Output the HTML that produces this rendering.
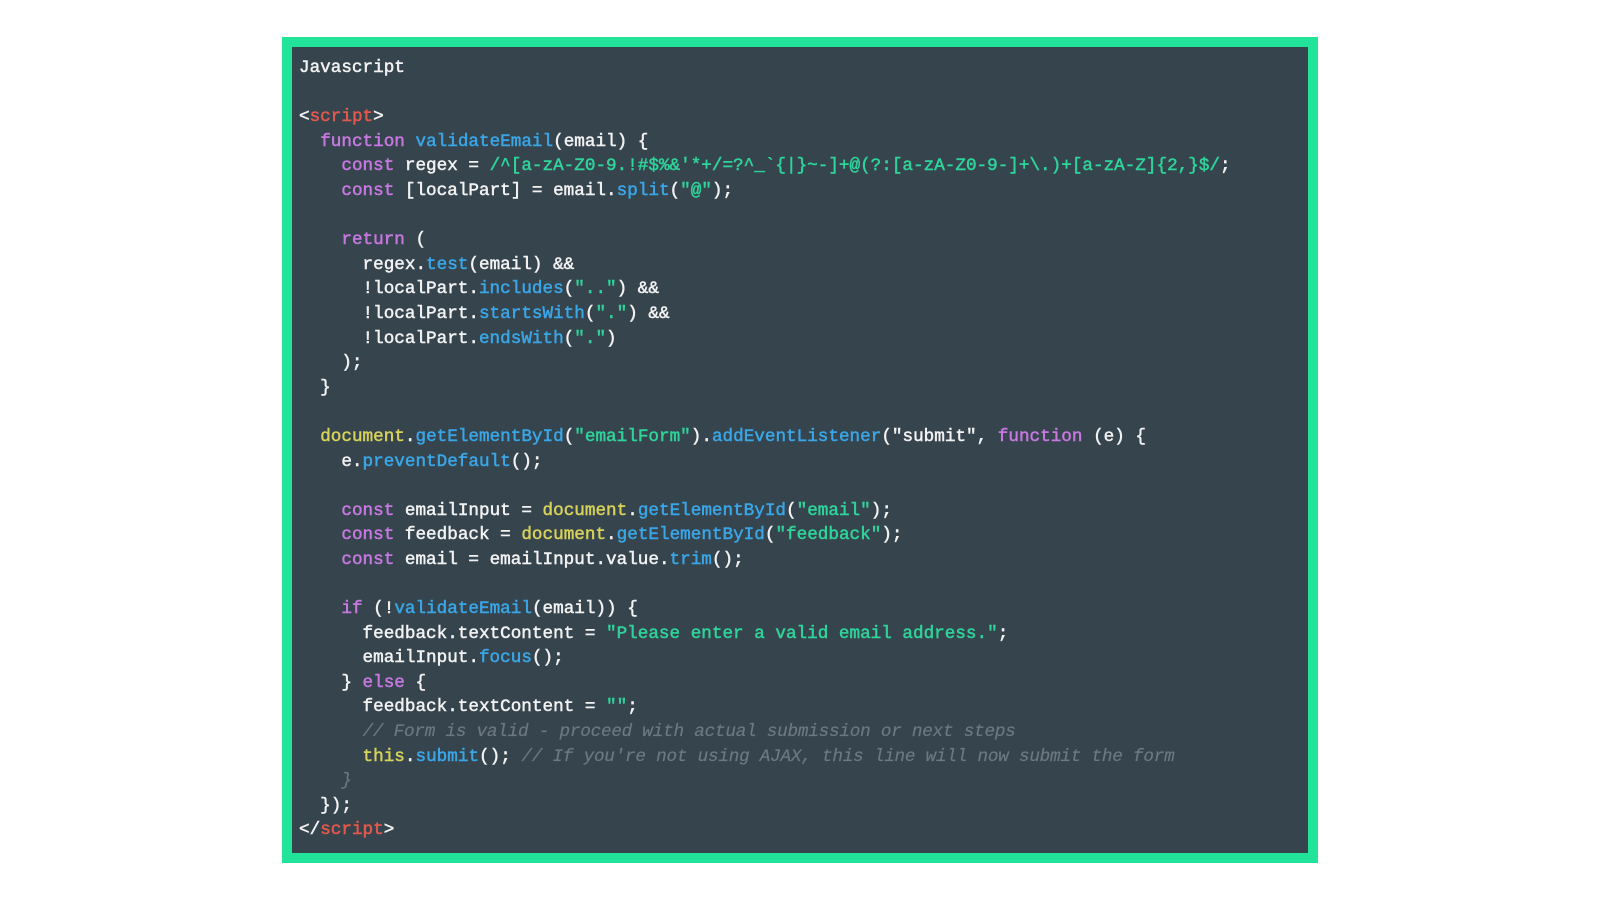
<!DOCTYPE html>
<html><head><meta charset="utf-8"><style>
html,body{margin:0;padding:0;background:#fff;width:1600px;height:900px;overflow:hidden}
.box{position:absolute;left:282px;top:37px;width:1016px;height:806px;border:10px solid #22e39a;background:#36444e}
pre{margin:0;position:absolute;left:7px;top:9px;font-family:"Liberation Mono",monospace;font-size:17.65px;line-height:24.6px;color:#f2f2f2;-webkit-text-stroke:0.5px currentColor}
.k{color:#c778e0}.f{color:#3aa6e6}.s{color:#2fd49a}.r{color:#e4584c}.y{color:#d6d25a}.c{color:#6c7882;font-style:italic;-webkit-text-stroke:0.2px currentColor;letter-spacing:-0.22px}
</style></head><body>
<div class="box"><pre>Javascript

&lt;<span class="r">script</span>&gt;
  <span class="k">function</span> <span class="f">validateEmail</span>(email) {
    <span class="k">const</span> regex = <span class="s">/^[a-zA-Z0-9.!#$%&amp;'*+/=?^_`{|}~-]+@(?:[a-zA-Z0-9-]+\.)+[a-zA-Z]{2,}$/</span>;
    <span class="k">const</span> [localPart] = email.<span class="f">split</span>(<span class="s">"@"</span>);

    <span class="k">return</span> (
      regex.<span class="f">test</span>(email) &amp;&amp;
      !localPart.<span class="f">includes</span>(<span class="s">".."</span>) &amp;&amp;
      !localPart.<span class="f">startsWith</span>(<span class="s">"."</span>) &amp;&amp;
      !localPart.<span class="f">endsWith</span>(<span class="s">"."</span>)
    );
  }

  <span class="y">document</span>.<span class="f">getElementById</span>(<span class="s">"emailForm"</span>).<span class="f">addEventListener</span>("submit", <span class="k">function</span> (e) {
    e.<span class="f">preventDefault</span>();

    <span class="k">const</span> emailInput = <span class="y">document</span>.<span class="f">getElementById</span>(<span class="s">"email"</span>);
    <span class="k">const</span> feedback = <span class="y">document</span>.<span class="f">getElementById</span>(<span class="s">"feedback"</span>);
    <span class="k">const</span> email = emailInput.value.<span class="f">trim</span>();

    <span class="k">if</span> (!<span class="f">validateEmail</span>(email)) {
      feedback.textContent = <span class="s">"Please enter a valid email address."</span>;
      emailInput.<span class="f">focus</span>();
    } <span class="k">else</span> {
      feedback.textContent = <span class="s">""</span>;
      <span class="c">// Form is valid - proceed with actual submission or next steps</span>
      <span class="y">this</span>.<span class="f">submit</span>(); <span class="c">// If you're not using AJAX, this line will now submit the form</span>
    <span class="c">}</span>
  });
&lt;/<span class="r">script</span>&gt;</pre></div>
</body></html>
